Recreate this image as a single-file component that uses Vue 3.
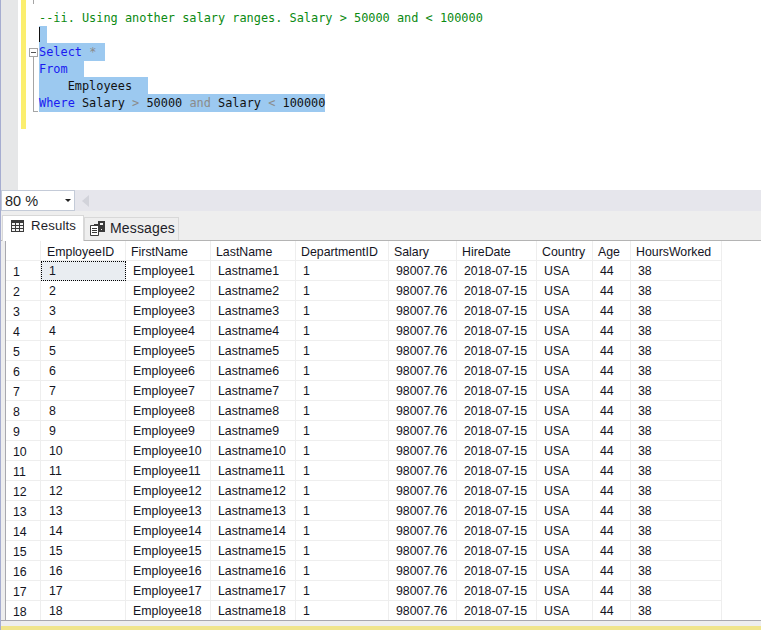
<script setup>
const columns = ['EmployeeID', 'FirstName', 'LastName', 'DepartmentID', 'Salary', 'HireDate', 'Country', 'Age', 'HoursWorked']
const rows = Array.from({ length: 18 }, (_, i) => {
  const n = i + 1
  return [n, 'Employee' + n, 'Lastname' + n, 1, '98007.76', '2018-07-15', 'USA', 44, 38]
})
</script>

<template>
  <div class="app">
    <section class="editor">
      <div class="gutter"></div>
      <div class="change-wrap"><div class="change-bar"></div></div>
      <div class="outline">
        <div class="fold-top"></div>
        <div class="fold-line"></div>
        <div class="fold-box"></div>
      </div>
      <div class="code">
        <div class="line"><span class="com">--ii. Using another salary ranges. Salary &gt; 50000 and &lt; 100000</span></div>
        <div class="line"><span class="sel caret"></span></div>
        <div class="line"><span class="sel pad"><span class="kw">Select</span> <span class="op">*</span>&#160;</span></div>
        <div class="line"><span class="sel pad"><span class="kw">From</span>&#160;&#160;</span></div>
        <div class="line"><span class="sel pad">&#160;&#160;&#160;&#160;Employees&#160;&#160;</span></div>
        <div class="line"><span class="sel"><span class="kw">Where</span> Salary <span class="op">&gt;</span> 50000 <span class="op">and</span> Salary <span class="op">&lt;</span> 100000</span></div>
      </div>
    </section>

    <div class="zoombar">
      <div class="zoom-select">
        <span>80 %</span>
        <span class="zoom-arrow"></span>
      </div>
      <span class="scroll-left"></span>
    </div>

    <div class="tabs">
      <div class="tab active">
        <svg width="13" height="12" viewBox="0 0 13 12" class="tab-icon">
          <rect x="0" y="0" width="13" height="12" fill="#3a3a3a"/>
          <path d="M1 3h3v2H1zM5 3h3v2H5zM9 3h3v2H9zM1 6h3v2H1zM5 6h3v2H5zM9 6h3v2H9zM1 9h3v2H1zM5 9h3v2H5zM9 9h3v2H9z" fill="#f4f4f4"/>
        </svg>
        <span>Results</span>
      </div>
      <div class="tab">
        <svg width="15" height="15" viewBox="0 0 15 15" class="tab-icon">
          <path d="M0.5 4.5h8v10h-8z" fill="#fff" stroke="#3a3a3a"/>
          <path d="M2 7.5h5M2 9.5h5M2 11.5h5" stroke="#3a3a3a"/>
          <rect x="4" y="3" width="4" height="2" fill="#3a3a3a"/>
          <rect x="8" y="0" width="7" height="11" fill="#3a3a3a"/>
          <rect x="10" y="2" width="3" height="2" fill="#f4f4f4"/>
          <rect x="11" y="8" width="1" height="1" fill="#f4f4f4"/>
        </svg>
        <span>Messages</span>
      </div>
    </div>

    <div class="grid-panel">
      <div class="grid">
        <div class="row head">
          <div class="cell corner"></div>
          <div v-for="c in columns" :key="c" class="cell">{{ c }}</div>
        </div>
        <div v-for="(r, ri) in rows" :key="ri" class="row">
          <div class="cell rownum">{{ ri + 1 }}</div>
          <div
            v-for="(v, ci) in r"
            :key="ci"
            class="cell data"
            :class="{ first: ci === 0, current: ri === 0 && ci === 0 }"
          >{{ v }}</div>
        </div>
      </div>
    </div>

    <div class="bottom-gap"></div>
    <div class="bottom-bar"></div>
  </div>
</template>

<style>
html, body { margin: 0; padding: 0; background: #fff; overflow: hidden; }
</style>

<style scoped>
.app {
  width: 761px;
  height: 630px;
  display: flex;
  flex-direction: column;
  overflow: hidden;
  font-family: "Liberation Sans", Arial, sans-serif;
  color: #111;
  background: #fff;
  box-sizing: border-box;
  border-left: 1px solid #a6add0;
}

/* Editor */
.editor {
  height: 190px;
  flex: none;
  display: flex;
  background: #fff;
}
.gutter {
  width: 17px;
  flex: none;
  background: #e6e7e8;
}
.change-wrap { width: 10px; flex: none; padding-left: 3px; box-sizing: border-box; }
.change-bar { width: 5px; height: 129px; background: #fbee6e; }
.outline { width: 11px; flex: none; position: relative; }
.fold-top {
  position: absolute;
  left: 5px;
  top: 0;
  width: 1px;
  height: 4px;
  background: #a5a5a5;
}
.fold-line {
  position: absolute;
  left: 5px;
  top: 57px;
  width: 1px;
  height: 55px;
  background: #a5a5a5;
}
.fold-line::after {
  content: "";
  position: absolute;
  left: 0;
  bottom: 0;
  width: 5px;
  height: 1px;
  background: #a5a5a5;
}
.fold-box {
  position: absolute;
  left: 1px;
  top: 48px;
  width: 7px;
  height: 7px;
  border: 1px solid #a5a5a5;
  background: linear-gradient(#555, #555) center / 5px 1px no-repeat #fff;
}
.code {
  padding-top: 10px;
  font-family: "DejaVu Sans Mono", "Liberation Mono", monospace;
  font-size: 11.9px;
  color: #111;
  white-space: pre;
  flex: 1;
}
.line { height: 17px; line-height: 17px; }
.sel {
  display: inline-block;
  box-sizing: border-box;
  background: #9cc9f0;
  height: 18px;
  margin-top: -1px;
  padding-top: 1px;
  vertical-align: top;
}
.pad { padding-right: 2px; }
.caret { width: 8px; position: relative; }
.caret::before {
  content: "";
  position: absolute;
  left: 0;
  top: 1px;
  width: 1px;
  height: 15px;
  background: #111;
}
.com { color: #0b8a12; }
.kw { color: #1a1af0; }
.op { color: #8b8b8b; }

/* Zoom bar */
.zoombar {
  height: 21px;
  flex: none;
  display: flex;
  align-items: center;
  background: #e6e6ec;
}
.zoom-select {
  width: 74px;
  height: 21px;
  box-sizing: border-box;
  background: #fff;
  border: 1px solid #c4cbd8;
  padding: 0 3px 0 3px;
  display: flex;
  align-items: center;
  justify-content: space-between;
  font-size: 14.5px;
  color: #1e1e1e;
}
.zoom-arrow {
  width: 0;
  height: 0;
  border-left: 3px solid transparent;
  border-right: 3px solid transparent;
  border-top: 3px solid #222;
}
.scroll-left {
  margin-left: 7px;
  width: 0;
  height: 0;
  border-top: 6px solid transparent;
  border-bottom: 6px solid transparent;
  border-right: 7px solid #d2d3da;
}

/* Tabs */
.tabs {
  height: 30px;
  flex: none;
  display: flex;
  align-items: flex-end;
  padding-left: 1px;
  background: #eeeeee;
  box-sizing: border-box;
  border-bottom: 1px solid #b4b4b4;
  font-size: 14px;
  color: #1e1e2a;
}
.tab {
  height: 23px;
  width: 95px;
  display: flex;
  align-items: center;
  box-sizing: border-box;
  padding: 0 0 2px 5px;
  gap: 5px;
  background: #eeeeee;
  border: 1px solid #d8d8d8;
  border-bottom: none;
  letter-spacing: 0.15px;
}
.tab.active {
  width: 82px;
  height: 26px;
  margin-bottom: -1px;
  padding: 0 0 6px 8px;
  background: #fff;
  gap: 7px;
  font-size: 13.2px;
  position: relative;
  z-index: 1;
}
.tab-icon { flex: none; }

/* Grid */
.grid-panel {
  height: 380px;
  flex: none;
  padding-left: 4px;
  background: linear-gradient(#eeeeee, #eeeeee) left / 4px 100% no-repeat #fff;
  box-sizing: border-box;
  border-bottom: 1px solid #a8a8ae;
  overflow: hidden;
}
.grid {
  border-left: 1px solid #a8a8ae;
  font-size: 12.35px;
  color: #14141e;
  height: 100%;
}
.row {
  display: grid;
  grid-template-columns: 35px 85px 85px 85px 93px 68px 80px 56px 38px 91px;
  height: 20px;
  width: max-content;
}
.cell {
  box-sizing: border-box;
  border-right: 1px solid #eeeeee;
  border-bottom: 1px solid #eeeeee;
  padding-left: 6px;
  white-space: nowrap;
  overflow: hidden;
}
.head .cell { padding-left: 5px; line-height: 22px; }
.head .cell:nth-child(2) { padding-left: 6px; }
.data { padding-left: 7px; line-height: 20px; }
.first { padding-left: 8px; }
.rownum { padding-left: 7px; line-height: 22px; }
.current {
  background: #e9edf1;
  outline: 1px dotted #000;
  outline-offset: -1px;
  border-color: transparent;
}

.bottom-gap { flex: 1; background: #eeeeee; }
.bottom-bar { height: 4px; flex: none; background: #f0e58c; }
</style>
